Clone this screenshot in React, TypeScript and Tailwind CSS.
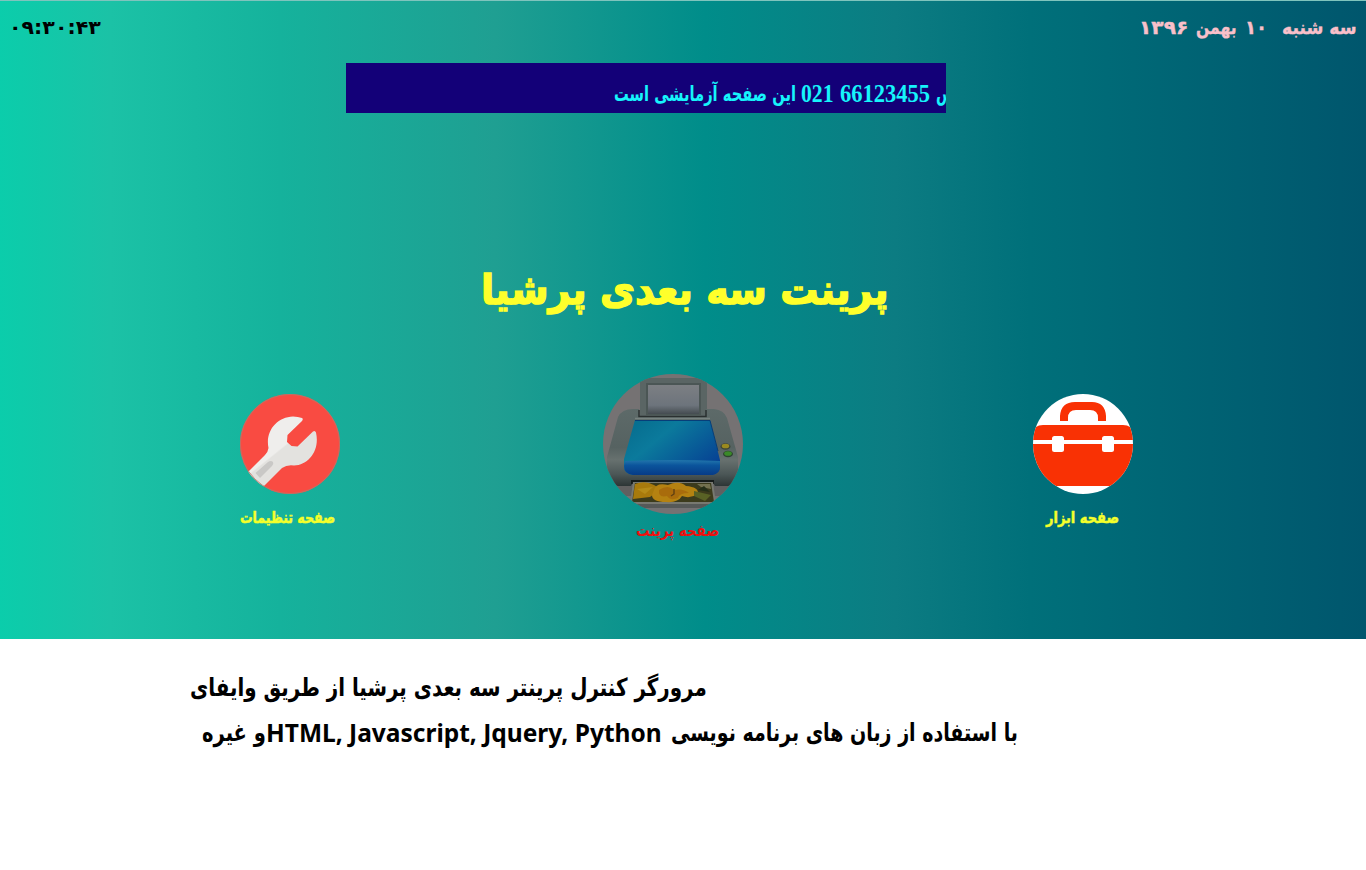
import { useLayoutEffect, useRef, useState } from 'react';
import type { ReactNode } from 'react';

type FitProps = { width: number; className?: string; dir?: 'rtl' | 'ltr'; children: ReactNode };

/* Sets a run of text to an exact measure by scaling it horizontally. */
function Fit({ width, className = '', dir = 'rtl', children }: FitProps) {
  const ref = useRef<HTMLSpanElement>(null);
  const [scale, setScale] = useState(1);
  useLayoutEffect(() => {
    if (ref.current) setScale(width / ref.current.offsetWidth);
  }, [width]);
  return (
    <span className={`flex shrink-0 justify-start ${className}`} dir="ltr" style={{ width }}>
      <span
        ref={ref}
        dir={dir}
        className="block origin-left whitespace-pre"
        style={{ transform: `scaleX(${scale})` }}
      >
        {children}
      </span>
    </span>
  );
}

function WrenchIcon() {
  return (
    <svg viewBox="0 0 100 100" className="block size-[100px]">
      <defs>
        <clipPath id="wrench-disc"><circle cx="50" cy="50" r="50" /></clipPath>
        <linearGradient id="wrench-metal" gradientUnits="userSpaceOnUse" x1="30" y1="30" x2="62" y2="70">
          <stop offset="0.5" stopColor="#efeeec" />
          <stop offset="0.53" stopColor="#e3e2df" />
        </linearGradient>
      </defs>
      <g clipPath="url(#wrench-disc)">
        <rect width="100" height="100" fill="#f94b42" />
        <path
          d="M0 86 L25 61 Q28 58 28.500 54 C25 37 37 23 53 22.500 Q58 22.500 62 24 Q63.500 25 62 27 L47.500 41 L47 48 L51.500 52 L57.500 52.500 L73 37.500 Q75 36 76 38.500 C80 56 69 71 54 71.500 Q47 70.500 42 74 L15 101 Z"
          fill="url(#wrench-metal)"
        />
        <path d="M15.500 79 L28 68 Q31 66 33 68 Q34 70 32 72 L20 84 Z" fill="#c9c8c6" />
      </g>
      <circle cx="50" cy="50" r="49.6" fill="none" stroke="#b9776b" strokeWidth="0.8" />
    </svg>
  );
}

function PrinterIcon() {
  return (
    <svg viewBox="0 0 140 140" className="block size-[140px]">
      <defs>
        <clipPath id="printer-disc"><circle cx="70" cy="70" r="70" /></clipPath>
        <linearGradient id="printer-lid" x1="0" y1="0" x2="1" y2="0.7">
          <stop offset="0" stopColor="#056b8c" />
          <stop offset="0.4" stopColor="#0b7a9c" />
          <stop offset="1" stopColor="#064394" />
        </linearGradient>
        <linearGradient id="printer-front" x1="0" y1="0" x2="0" y2="1">
          <stop offset="0" stopColor="#2276ac" />
          <stop offset="0.35" stopColor="#0b559c" />
          <stop offset="1" stopColor="#063b87" />
        </linearGradient>
        <linearGradient id="printer-body" x1="0" y1="0" x2="0" y2="1">
          <stop offset="0" stopColor="#5d6a69" />
          <stop offset="0.5" stopColor="#566261" />
          <stop offset="0.66" stopColor="#67716f" />
          <stop offset="0.85" stopColor="#4b5656" />
          <stop offset="1" stopColor="#2d3535" />
        </linearGradient>
        <linearGradient id="printer-sheet" x1="0" y1="0" x2="0" y2="1">
          <stop offset="0" stopColor="#7c7f83" />
          <stop offset="0.7" stopColor="#6d747c" />
          <stop offset="1" stopColor="#454c51" />
        </linearGradient>
      </defs>
      <g clipPath="url(#printer-disc)">
        <rect width="140" height="140" fill="#757273" />
        <path d="M0 106 H140 V122 H0Z" fill="#616060" />
        <path d="M28 130 H112 V134 H28Z" fill="#565958" />
        <path d="M37 4 H104 V45 H37Z" fill="#5a6564" />
        <path d="M43 9 H98 V41 H43Z" fill="#4b5655" />
        <path d="M45 11 H96 V40 H45Z" fill="url(#printer-sheet)" />
        <path d="M15 43 Q19 35 30 35 H36 V42 H103 V35 H111 Q121 36 124 44 L135 83 V101 Q133 111 125 112 H112 L109 107 H31 L28 112 H15 Q5 110 4 101 V83Z" fill="url(#printer-body)" />
        <path d="M36 36 V42.500 H103 V36" fill="none" stroke="#2a3030" strokeWidth="1.5" />
        <path d="M32 44.500 H107" stroke="#788280" strokeWidth="1.5" />
        <path d="M32 46 H107 L117 86 V92 Q117 100 109 101 H30 Q21 100 21 92 V85Z" fill="url(#printer-lid)" />
        <path d="M22 87 Q70 85 117 87 V92 Q117 100 109 101 H30 Q21 100 21 92Z" fill="url(#printer-front)" />
        <path d="M32 46.500 H107 L115 77" fill="none" stroke="#073e79" strokeWidth="1" />
        <ellipse cx="122.500" cy="72.500" rx="5" ry="3.200" fill="#3d4637" />
        <ellipse cx="122.500" cy="72" rx="3.800" ry="2.300" fill="#9a8a20" />
        <ellipse cx="125" cy="80" rx="5" ry="3.200" fill="#2c4330" />
        <ellipse cx="125" cy="79.500" rx="3.800" ry="2.300" fill="#3a8a28" />
        <path d="M28 106 H111 V110 H28Z" fill="#161b1a" />
        <path d="M30 108 H110 L113 130 H27Z" fill="#787971" />
        <path d="M32 109 H108 L111 128 H29Z" fill="#3c3b1c" />
        <path d="M32 110 Q42 106 51 111 L58 115 L47 123 L30 125Z" fill="#a87a0c" />
        <path d="M34 115 L50 113 L42 120Z" fill="#b58b18" />
        <path d="M51 116 Q53 108 65 111 Q76 106 83 112 Q96 113 95 120 Q87 125 79 122 Q75 129 63 128 Q49 128 49 121Z" fill="#b58211" />
        <path d="M56 116 Q65 110 71 116 Q80 114 86 119 Q76 119 75 124 Q67 127 64 122 Q55 124 56 116Z" fill="#a96c0c" />
        <path d="M71 115 L71 120 L68 122" stroke="#604013" strokeWidth="1.4" fill="none" />
        <path d="M94 110 L107 110 L108 115 L98 113Z" fill="#73714f" />
        <path d="M91 117 L108 121 L102 127 L91 122Z" fill="#596225" />
        <path d="M101 112 L107 118 L95 116Z" fill="#252f18" />
      </g>
    </svg>
  );
}

function ToolboxIcon() {
  return (
    <svg viewBox="0 0 100 100" className="block size-[100px]">
      <defs><clipPath id="toolbox-disc"><circle cx="50" cy="50" r="50" /></clipPath></defs>
      <g clipPath="url(#toolbox-disc)">
        <rect width="100" height="100" fill="#fff" />
        <path d="M27 27 V22 Q28 8 42 8 H59 Q72 8 73 22 V27 H65 V24 Q65 16 57 16 H43 Q35 16 35 24 V27Z" fill="#f93104" />
        <path d="M0 46 V39 Q1 31 10 31 H90 Q99 31 100 39 V46Z" fill="#f93104" />
        <path d="M0 50 H100 V92 H0Z" fill="#f93104" />
        <rect x="19" y="42" width="12" height="16" rx="2.500" fill="#fff" />
        <rect x="69" y="42" width="12" height="16" rx="2.500" fill="#fff" />
      </g>
    </svg>
  );
}

export default function App() {
  return (
    <div className="h-[870px] w-[1366px] overflow-hidden bg-white font-['DejaVu_Sans',sans-serif] font-bold">
      <main className="flex h-[639px] flex-col border-t border-[#7fc4bd] bg-[linear-gradient(90deg,#0bcdab_0px,#1bc2a6_110px,#15b29c_280px,#1f9f92_495px,#008d8a_705px,#0c7c82_895px,#00707a_1030px,#00566d_1366px)]">
        <header className="flex h-[62px] items-start justify-between pt-[12px] pr-[9px] pl-[9px] text-[19px] leading-7">
          <Fit width={92} dir="ltr" className="text-black">۰۹:۳۰:۴۳</Fit>
          <div dir="rtl" className="flex text-[#f9c0ca] [-webkit-text-stroke:0.4px_#f9c0ca]">
            <Fit width={75}>سه شنبه</Fit>
            <Fit width={22} className="mr-[15px]">۱۰</Fit>
            <Fit width={41} className="mr-[8px]">بهمن</Fit>
            <Fit width={49} className="mr-[8px]">۱۳۹۶</Fit>
          </div>
        </header>

        <div dir="rtl" className="ml-[346px] flex h-[50px] w-[600px] overflow-hidden bg-[#130078] pt-[15px] text-[21px] leading-8 text-[#16f4fb]">
          <Fit width={40} className="-mr-[30px]">تماس</Fit>
          <Fit width={90} dir="ltr" className="mr-[6px] font-['Liberation_Serif',serif] text-[25px]">66123455</Fit>
          <Fit width={33} dir="ltr" className="mr-[6px] font-['Liberation_Serif',serif] text-[25px]">021</Fit>
          <Fit width={182} className="mr-[5px]">این صفحه آزمایشی است</Fit>
        </div>

        <h1 className="mt-[144px] ml-[481px] flex h-[80px] text-[41px] leading-[66px] text-[#ffff2b] [-webkit-text-stroke:1.5px_#ffff2b]">
          <Fit width={408}>پرینت سه بعدی پرشیا</Fit>
        </h1>

        <nav className="mt-[37px] flex text-[16px] leading-6 text-[#f4ff2b]">
          <a className="mt-[20px] ml-[240px] flex w-[100px] flex-col gap-[12px]">
            <WrenchIcon />
            <Fit width={95} className="[-webkit-text-stroke:0.5px_#f4ff2b]">صفحه تنظیمات</Fit>
          </a>
          <a className="ml-[263px] flex w-[140px] flex-col gap-[5px] text-[#ed1010]">
            <PrinterIcon />
            <Fit width={83} className="ml-[33px]">صفحه پرینت</Fit>
          </a>
          <a className="mt-[20px] ml-[290px] flex w-[100px] flex-col gap-[12px]">
            <ToolboxIcon />
            <Fit width={73} className="ml-[13px] [-webkit-text-stroke:0.5px_#f4ff2b]">صفحه ابزار</Fit>
          </a>
        </nav>
      </main>

      <section className="flex flex-col pt-[26px] text-[25px] leading-[45px] text-black">
        <Fit width={517} className="ml-[190px]">مرورگر کنترل پرینتر سه بعدی پرشیا از طریق وایفای</Fit>
        <div dir="rtl" className="ml-[202px] flex w-[816px]">
          <Fit width={347}>با استفاده از زبان های برنامه نویسی</Fit>
          <Fit width={396} dir="ltr" className="mr-[9px] font-['Noto_Sans',sans-serif]">HTML, Javascript, Jquery, Python</Fit>
          <Fit width={64}>و غیره</Fit>
        </div>
      </section>
    </div>
  );
}
